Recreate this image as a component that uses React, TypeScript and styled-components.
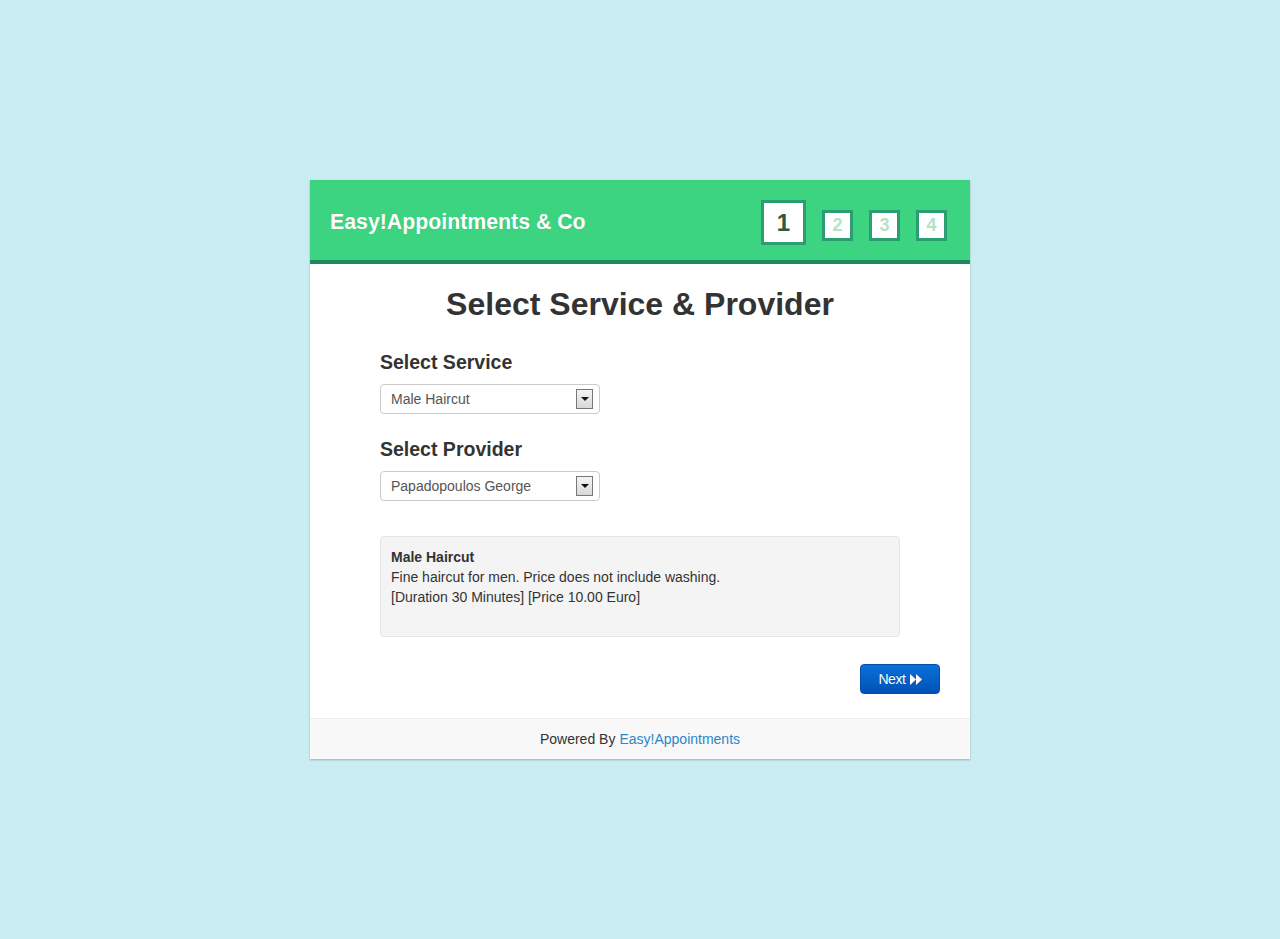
import React, { FC } from 'react';
import styled, { createGlobalStyle } from 'styled-components';

const GlobalStyle = createGlobalStyle`
  html, body {
    margin: 0;
    padding: 0;
    background-color: #caedf3;
    font-family: "Liberation Sans", Arial, sans-serif;
    color: #333;
  }
`;

const Page = styled.div`
  min-height: 939px;
  padding-top: 180px;
  box-sizing: border-box;
`;

const Frame = styled.div`
  width: 660px;
  margin: 0 auto;
  background-color: #fff;
  box-shadow: 0 1px 2px rgba(0, 0, 0, 0.25);
`;

const Header = styled.div`
  height: 80px;
  background-color: #3dd481;
  border-bottom: 4px solid #1b8a5f;
  display: flex;
  justify-content: space-between;
  align-items: flex-start;
  padding: 0 23px 0 20px;
`;

const CompanyName = styled.div`
  margin-top: 30px;
  font-size: 21.3px;
  font-weight: bold;
  color: #fff;
  text-shadow: 0 0 1px rgba(0, 0, 0, 0.15);
`;

const Steps = styled.div`
  display: flex;
  gap: 16px;
  margin-top: 20px;
  align-items: flex-start;
`;

const Step = styled.div<{ $active?: boolean }>`
  box-sizing: border-box;
  width: ${p => (p.$active ? 45 : 31)}px;
  height: ${p => (p.$active ? 45 : 31)}px;
  margin-top: ${p => (p.$active ? 0 : 10)}px;
  border: 3px solid #2b9d73;
  background-color: #fff;
  display: flex;
  justify-content: center;
  align-items: center;
  font-weight: bold;
  font-size: ${p => (p.$active ? 24 : 18)}px;
  color: ${p => (p.$active ? '#2e5a3c' : '#b5e2c6')};
`;

const Body = styled.div`
  padding: 20px 30px 24px 70px;
`;

const Title = styled.h2`
  margin: 0 40px 27px 0;
  font-size: 32px;
  line-height: 40px;
  font-weight: bold;
  text-align: center;
  color: #333;
`;

const Label = styled.h3`
  margin: 0 0 11px;
  font-size: 19.5px;
  line-height: 22px;
  font-weight: bold;
  color: #333;
`;

const SelectBox = styled.div`
  box-sizing: border-box;
  width: 220px;
  height: 30px;
  border: 1px solid #ccc;
  border-radius: 4px;
  display: flex;
  align-items: center;
  justify-content: space-between;
  padding: 0 6px 0 10px;
  margin-bottom: 24px;
  font-size: 14px;
  color: #555;
`;

const ArrowBox = styled.div`
  box-sizing: border-box;
  width: 17px;
  height: 20px;
  border: 1px solid #777;
  background: linear-gradient(#f4f4f4, #d8d8d8);
  display: flex;
  justify-content: center;
  align-items: center;
`;

const Arrow = styled.div`
  width: 0;
  height: 0;
  border-left: 4px solid transparent;
  border-right: 4px solid transparent;
  border-top: 4px solid #111;
`;

const InfoBox = styled.div`
  box-sizing: border-box;
  width: 520px;
  margin-top: 35px;
  padding: 10px 10px 29px;
  background-color: #f4f4f4;
  border: 1px solid #e5e5e5;
  border-radius: 4px;
  font-size: 14px;
  line-height: 20px;
  color: #333;
`;

const InfoTitle = styled.strong`
  display: block;
`;

const ButtonRow = styled.div`
  display: flex;
  justify-content: flex-end;
  margin-top: 27px;
`;

const NextButton = styled.button`
  box-sizing: border-box;
  width: 80px;
  height: 30px;
  border: 1px solid #0450a8;
  border-radius: 4px;
  background: linear-gradient(#0a71d8, #0152b6);
  color: #fff;
  font-family: "Liberation Sans", Arial, sans-serif;
  font-size: 14px;
  letter-spacing: -0.4px;
  display: flex;
  align-items: center;
  justify-content: center;
  gap: 4px;
  padding: 0;
  text-shadow: 0 -1px 0 rgba(0, 0, 0, 0.25);
`;

const Footer = styled.div`
  height: 41px;
  box-sizing: border-box;
  border-top: 1px solid #eee;
  background-color: #f8f8f8;
  display: flex;
  justify-content: center;
  align-items: center;
  font-size: 14px;
  color: #333;
`;

const FooterLink = styled.a`
  color: #2a87c8;
  text-decoration: none;
  margin-left: 4px;
`;

const ForwardIcon: FC = () => (
  <svg width="12" height="11" viewBox="0 0 12 11">
    <path d="M0 0 L6 5.5 L0 11 Z M6 0 L12 5.5 L6 11 Z" fill="#fff" />
  </svg>
);

const App: FC = () => {
  return (
    <>
      <GlobalStyle />
      <Page>
        <Frame>
          <Header>
            <CompanyName>Easy!Appointments &amp; Co</CompanyName>
            <Steps>
              <Step $active>1</Step>
              <Step>2</Step>
              <Step>3</Step>
              <Step>4</Step>
            </Steps>
          </Header>

          <Body>
            <Title>Select Service &amp; Provider</Title>

            <Label>Select Service</Label>
            <SelectBox>
              <span>Male Haircut</span>
              <ArrowBox><Arrow /></ArrowBox>
            </SelectBox>

            <Label>Select Provider</Label>
            <SelectBox>
              <span>Papadopoulos George</span>
              <ArrowBox><Arrow /></ArrowBox>
            </SelectBox>

            <InfoBox>
              <InfoTitle>Male Haircut</InfoTitle>
              Fine haircut for men. Price does not include washing.
              <br />
              [Duration 30 Minutes] [Price 10.00 Euro]
            </InfoBox>

            <ButtonRow>
              <NextButton>
                Next <ForwardIcon />
              </NextButton>
            </ButtonRow>
          </Body>

          <Footer>
            Powered By<FooterLink href="#">Easy!Appointments</FooterLink>
          </Footer>
        </Frame>
      </Page>
    </>
  );
};

export default App;
